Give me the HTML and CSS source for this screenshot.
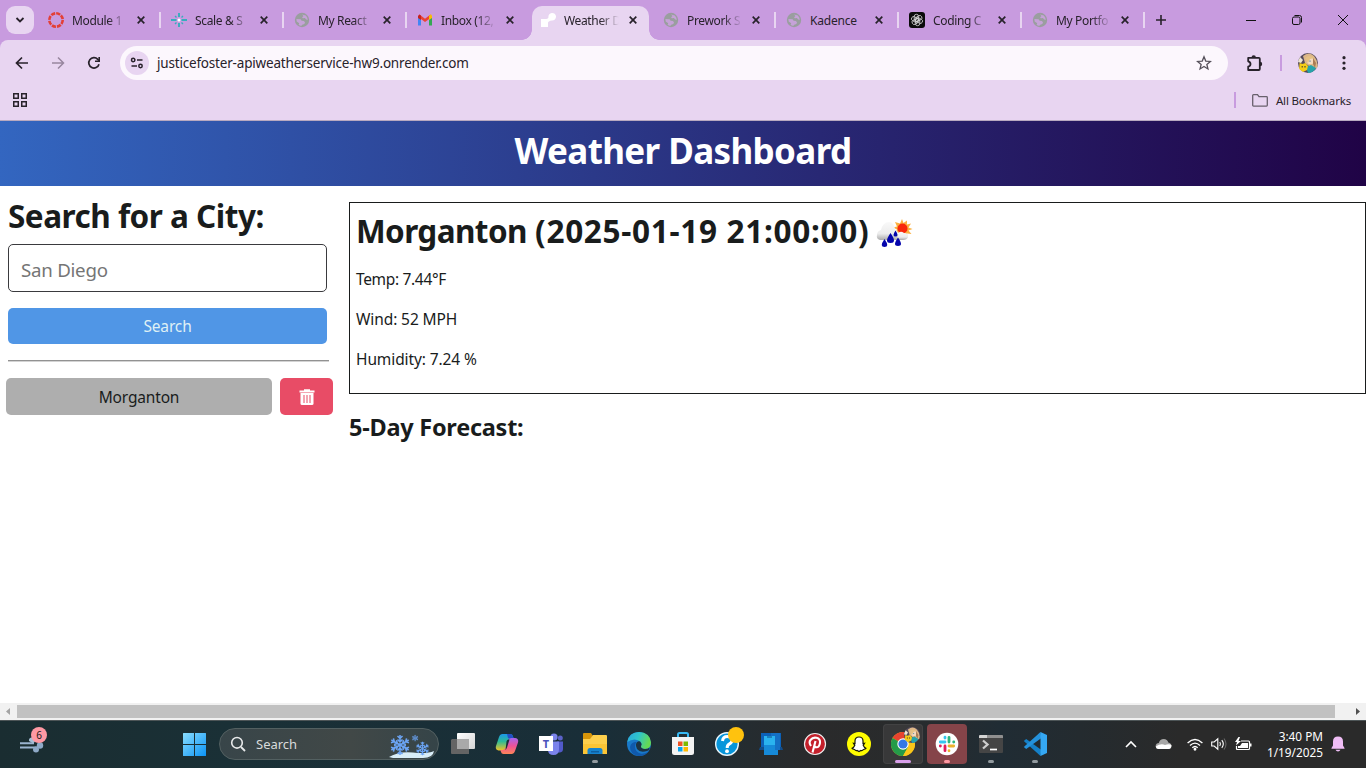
FILE: index.html
```
<!DOCTYPE html>
<html lang="en">
<head>
<meta charset="utf-8">
<title>Weather Dashboard</title>
<link rel="stylesheet" href="styles.css">
</head>
<body>
<svg class="defs" aria-hidden="true">
  <symbol id="close" viewBox="0 0 8 8"><path d="M.7.7l6.6 6.6M7.3.7L.7 7.3" fill="none" stroke="#28222b" stroke-width="1.7"/></symbol>
  <symbol id="globe" viewBox="0 0 16 16"><circle cx="8" cy="8" r="7.2" fill="#9a9e9f"/><path d="M2.4 7l4.2.3 1 1.500 2.200.2 1.200 1.300-.6 1.800-2.200.6-1 1.300-2.600-.9.6-1.900-2.500-1.600zM8 2.600l1.500 1.400-1.400 1.300.7 1 2.100-.2 1.400 1.500 1.400.3-.4-2.200L11.800 3.600z" fill="#c6a2d8"/></symbol>
  <symbol id="avatar" viewBox="0 0 20 20"><circle cx="10" cy="10" r="10" fill="#554b5c"/><path d="M5 3Q11-2 16 3q5 6 3 12l-4 1L7 10z" fill="#dcb788"/><path d="M2 4l3 3-2 3-3-1z" fill="#eee6d3"/><circle cx="12.500" cy="8" r="3.300" fill="#f5d9bd"/><path d="M7 5q5-4 9 0l-4 1-2 4z" fill="#e5c183"/><path d="M15 5l3 5-1 5-2-4z" fill="#a97c55"/><path d="M12 7.500v1.300" stroke="#3b7fa8"/><path d="M8 14l5-2 5 3q-3 5-8 5z" fill="#26a3aa"/><path d="M1.500 10l3 1 3-1 2.500 3-1 4-4 2-3.800-3z" fill="#f5ce16"/><path d="M4.200 13v1.500M7 13v1.500" stroke="#37302b"/></symbol>
</svg>

<div class="tabstrip">
  <button class="tab-search"><svg width="10" height="6" viewBox="0 0 10 6"><path d="M1.500 1l3.500 3.500L8.500 1" fill="none" stroke="#28222b" stroke-width="1.800"/></svg></button>
  <div class="tab"><svg class="fav" viewBox="0 0 16 16"><circle cx="8" cy="8" r="6.700" fill="none" stroke="#e33f36" stroke-width="2.600" stroke-dasharray="4.200 1.060"/></svg><span>Module 1</span><svg class="x"><use href="#close"/></svg></div>
  <div class="tab"><svg class="fav" viewBox="0 0 16 16"><path d="M0 8h5.500M10.500 8H16M8 1v4M8 11v4" stroke="#36aebd" stroke-width="1.900"/><path d="M4 4l1.500 1.500M12 4l-1.500 1.500M4 12l1.500-1.500M12 12l-1.500-1.500" stroke="#36aebd" stroke-width="1.400"/><circle cx="8" cy="8" r="1.500" fill="#fff"/></svg><span>Scale &amp; S</span><svg class="x"><use href="#close"/></svg></div>
  <div class="tab"><svg class="fav"><use href="#globe"/></svg><span>My React</span><svg class="x"><use href="#close"/></svg></div>
  <div class="tab last"><svg class="fav" viewBox="0 0 16 16"><path d="M1 4v9.500h3V6z" fill="#4285f4"/><path d="M12 6v7.500h3V4z" fill="#34a853"/><path d="M1 4.500L2.500 2.500 8 6.800l5.500-4.300v3.400L8 10 4 7z" fill="#ea4335"/><path d="M12 3.700L14 2.300 15 4v2l-3 2z" fill="#fbbc04"/><path d="M1 4l1.500-1.500L4 3.700V8L1 6z" fill="#c5221f"/></svg><span>Inbox (12,</span><svg class="x"><use href="#close"/></svg></div>
  <div class="tab active"><svg class="fav" viewBox="0 0 16 16"><path d="M1 7h5q1.500 0 2.500-1.500a3.800 3.800 0 1 1 3.500 3q-4 .5-4 2.500v4H1z" fill="#fff"/></svg><span>Weather D</span><svg class="x"><use href="#close"/></svg></div>
  <div class="tab"><svg class="fav"><use href="#globe"/></svg><span>Prework S</span><svg class="x"><use href="#close"/></svg></div>
  <div class="tab"><svg class="fav"><use href="#globe"/></svg><span class="full">Kadence</span><svg class="x"><use href="#close"/></svg></div>
  <div class="tab"><svg class="fav" viewBox="0 0 16 16"><rect width="16" height="16" rx="3" fill="#0b0b0b"/><g fill="none" stroke="#d8d8d8" stroke-width=".8"><rect id="petal" x="5.200" y="2.300" width="4.400" height="7.200" rx="2.200"/><use href="#petal" transform="rotate(60 8 8)"/><use href="#petal" transform="rotate(120 8 8)"/><use href="#petal" transform="rotate(180 8 8)"/><use href="#petal" transform="rotate(240 8 8)"/><use href="#petal" transform="rotate(300 8 8)"/></g></svg><span>Coding C</span><svg class="x"><use href="#close"/></svg></div>
  <div class="tab"><svg class="fav"><use href="#globe"/></svg><span>My Portfo</span><svg class="x"><use href="#close"/></svg></div>
  <svg class="newtab" width="12" height="12" viewBox="0 0 12 12"><path d="M6 1v10M1 6h10" stroke="#28222b" stroke-width="1.600"/></svg>
  <div class="window-controls">
    <svg width="12" height="12" viewBox="0 0 12 12"><path d="M1 6.500h10" stroke="#111"/></svg>
    <svg width="12" height="12" viewBox="0 0 12 12" fill="none" stroke="#111"><rect x="1.500" y="3" width="7.500" height="7.500" rx="1.500"/><path d="M3.500 1.500H8.500q2 0 2 2V8.500"/></svg>
    <svg width="12" height="12" viewBox="0 0 12 12"><path d="M1 1l10 10M11 1L1 11" stroke="#111"/></svg>
  </div>
</div>

<div class="chrome">
  <div class="toolbar">
    <svg class="nav" width="16" height="16" viewBox="0 0 16 16"><path d="M14 8H3M8 2.500L2.500 8 8 13.500" fill="none" stroke="#28222b" stroke-width="1.700"/></svg>
    <svg class="nav" width="16" height="16" viewBox="0 0 16 16"><path d="M2 8h11M8 2.500L13.500 8 8 13.500" fill="none" stroke="#98879f" stroke-width="1.500"/></svg>
    <svg class="nav" width="16" height="16" viewBox="0 0 16 16"><path d="M13 9.200A5.200 5.200 0 1 1 11.800 4.300L13 5.500" fill="none" stroke="#28222b" stroke-width="1.700"/><path d="M14 2v5H9V5.500h3.400V2z" fill="#28222b"/></svg>
    <div class="omnibox">
      <i class="site"><svg width="14" height="12" viewBox="0 0 14 12" fill="none" stroke="#28222b" stroke-width="1.500"><circle cx="3.200" cy="3" r="1.700"/><path d="M7 3h5.500M1.500 9H7"/><circle cx="10.500" cy="9" r="1.700"/></svg></i>
      <span class="url">justicefoster-apiweatherservice-hw9.onrender.com</span>
      <svg width="16" height="16" viewBox="0 0 16 16"><path d="M8 1.800l1.750 4.300 4.650.35-3.550 3 1.100 4.500L8 11.500l-3.950 2.450 1.100-4.500-3.550-3 4.650-.35z" fill="none" stroke="#55505a" stroke-width="1.300"/></svg>
    </div>
    <svg class="ext" width="18" height="18" viewBox="0 0 18 18"><path d="M2.200 3.800h10.600q1 0 1 1v10.200q0 1-1 1H2.200v-3.300q2.300-.7 2.300-2.700t-2.300-2.700z" fill="none" stroke="#28222b" stroke-width="1.800" stroke-linejoin="round"/><path d="M5.500 3.500a2.200 2.200 0 0 1 4.400 0zM14 7.800a2.200 2.200 0 0 1 0 4.400z" fill="#28222b"/></svg>
    <i class="bar"></i>
    <svg class="avatar" width="20" height="20"><use href="#avatar"/></svg>
    <svg class="kebab" width="4" height="14" viewBox="0 0 4 14" fill="#28222b"><circle cx="2" cy="1.700" r="1.600"/><circle cx="2" cy="7" r="1.600"/><circle cx="2" cy="12.300" r="1.600"/></svg>
  </div>
  <div class="bookmarks">
    <svg width="14" height="14" viewBox="0 0 14 14" fill="none" stroke="#28222b" stroke-width="1.500"><path d="M.75.750h4.500v4.500h-4.500zM8.750.750h4.500v4.500h-4.500zM.75 8.750h4.500v4.500h-4.500zM8.750 8.750h4.500v4.500h-4.500z"/></svg>
    <i class="bar"></i>
    <svg class="folder" width="16" height="13" viewBox="0 0 16 13"><path d="M.7 1.500Q.7.700 1.500.7h4L7 2.700h7.500q.8 0 .8.800v7.800q0 .8-.8.800h-13q-.8 0-.8-.8z" fill="none" stroke="#68606c" stroke-width="1.300"/></svg>
    <span>All Bookmarks</span>
  </div>
</div>

<main class="page">
  <header class="hero"><h1>Weather Dashboard</h1></header>
  <div class="content">
    <aside class="sidebar">
      <h2 class="label">Search for a City:</h2>
      <div class="field"><span>San Diego</span></div>
      <button class="search-btn">Search</button>
      <hr>
      <div class="history">
        <button class="city">Morganton</button>
        <button class="trash"><svg width="16" height="16" viewBox="0 0 16 16"><path d="M.5 1.500H5V.2h6v1.300h4.500V3.500H.5z" fill="#fff"/><path d="M1.500 4h13v10.500q0 1.500-1.500 1.500H3q-1.500 0-1.500-1.500z" fill="#fff"/><path d="M5 6v8M8 6v8M11 6v8" stroke="#e84c66"/></svg></button>
      </div>
    </aside>
    <section class="results">
      <article class="today">
        <h2><span><span class="place">Morganton</span> <span class="date">(2025-01-19 21:00:00)</span></span>
          <svg width="40" height="32" viewBox="0 0 40 32"><defs><linearGradient id="cl" x2="0" y2="1"><stop offset="0" stop-color="#f9f9f9"/><stop offset=".65" stop-color="#ececec"/><stop offset="1" stop-color="#aaa"/></linearGradient></defs><path d="M28 1l1.500 4 3.500-2.500v4l4-1-2.500 4 4 1.500-4 1.500 3 3.500-4.500-.5.500 4-4-3-3.500 2.500-.5-4.500-4.500 1 2-4-4-2 4-1-2-4.500 5 1.500z" fill="#fbb040"/><circle cx="28.500" cy="10.500" r="5" fill="#f8270b"/><path d="M20 21q-1-5 4-5 2-4 6-1 5 0 4 4-1 3-5 3h-8z" fill="url(#cl)"/><path d="M6 22q-4-1-3-5 0-4 4-5 2-8 8-8 5 0 6 8 4 1 3 6-1 4-5 4z" fill="url(#cl)"/><path d="M10.500 21q5.500 8 0 8t0-8M16.500 15q7 10 0 10t0-10M21.500 12.500q4 6 0 6t0-6M24 19.500q6 8.500 0 8.500t0-8.500" fill="#0505ac"/></svg></h2>
        <p class="temp">Temp: 7.44°F</p>
        <p>Wind: 52 MPH</p>
        <p>Humidity: 7.24 %</p>
      </article>
      <h3>5-Day Forecast:</h3>
    </section>
  </div>
</main>

<div class="hscroll">
  <svg width="17" height="17" viewBox="0 0 17 17"><path d="M10 5v7L6 8.500z" fill="#a3a3a3"/></svg>
  <i></i>
  <svg width="17" height="17" viewBox="0 0 17 17"><path d="M7 5v7l4-3.500z" fill="#505050"/></svg>
</div>

<footer class="taskbar">
  <div class="widgets"><svg width="24" height="18" viewBox="0 0 24 18"><path d="M0 8.200h14M0 12.600h17" stroke="#9ab4cf" stroke-width="2"/><path d="M9 6a3 3 0 1 1 4 2.300" fill="#a7bdd5"/><circle cx="16" cy="14.500" r="3" fill="#8ea9c7"/><circle cx="20" cy="10.500" r="3.200" fill="#8ea9c7"/></svg><b>6</b></div>
  <svg class="start" width="24" height="24" viewBox="0 0 24 24"><defs><linearGradient id="w" gradientUnits="userSpaceOnUse" x1="0" y1="0" x2="24" y2="24"><stop offset="0" stop-color="#8fe1ff"/><stop offset="1" stop-color="#0b93f5"/></linearGradient></defs><path d="M1 1.500q0-.5.500-.5H12v11H1zM13 1h10.500q.5 0 .5.500V12H13zM1 13h11v11H1.500q-.5 0-.5-.5zM13 13h11v10.500q0 .5-.5.500H13z" fill="url(#w)"/></svg>
  <div class="tsearch">
    <svg width="16" height="16" viewBox="0 0 16 16"><circle cx="7" cy="6.800" r="5.300" fill="none" stroke="#e8eaeb" stroke-width="1.600"/><path d="M11 11l4 4" stroke="#e8eaeb" stroke-width="1.800"/></svg>
    <span>Search</span>
    <svg class="snow" width="46" height="24" viewBox="0 0 46 24"><path d="M0 23Q10 17 24 18.500T45 17Q44 24 34 24H4z" fill="#d8edf7"/><g stroke="#6ba4f4" stroke-width="1.500" fill="none"><g id="fl"><path id="arm" d="M11 11V1M8.500 2L11 4.500 13.500 2M8.500 5.500L11 8l2.500-2.500"/><use href="#arm" transform="rotate(60 11 11)"/><use href="#arm" transform="rotate(120 11 11)"/><use href="#arm" transform="rotate(180 11 11)"/><use href="#arm" transform="rotate(240 11 11)"/><use href="#arm" transform="rotate(300 11 11)"/></g><use href="#fl" transform="translate(26 7) scale(.68)"/><use href="#fl" transform="translate(22.500 .5) scale(.33)"/></g></svg>
  </div>
  <div class="apps">
    <i><svg viewBox="0 0 24 24"><defs><linearGradient id="tv" y2="1"><stop offset="0" stop-color="#fff"/><stop offset="1" stop-color="#d5d5d5"/></linearGradient></defs><rect x="6" y="1" width="18" height="16" rx="1" fill="url(#tv)"/><path d="M1 7h17v15H1q-1 0-1-1V8z" fill="#646464"/><path d="M6 7h12v10H6z" fill="#a9a9a9"/></svg></i>
    <i><svg viewBox="0 0 24 24"><defs><linearGradient id="c1" x2="0" y2="1"><stop offset="0" stop-color="#1c98e8"/><stop offset=".45" stop-color="#2dbb97"/><stop offset="1" stop-color="#f5c324"/></linearGradient><linearGradient id="c2" x2="0" y2="1"><stop offset="0" stop-color="#a565ee"/><stop offset=".5" stop-color="#ee5297"/><stop offset="1" stop-color="#ff8557"/></linearGradient></defs><path d="M7.500 2h8q2 0 2.700 3l.6 2H15q-1.500 0-2 2l-2 6.500Q10 19 7 18.500H3.500Q0 18 1 14L4 5q1-3 3.500-3z" fill="url(#c1)"/><path d="M12 2h3.500q2 0 2.700 3l.6 2H15l-2-1z" fill="#244fc6"/><path d="M16.500 22h-8q-2 0-2.700-2.500L5.500 18H8q2 0 3-3l2-6q.8-3 3.500-3H20q4 .5 3 4.500l-3 8.500q-1 3-3.500 3z" fill="url(#c2)"/><path d="M11.500 9.500q.5-2 2-2h1l-2.500 8q-.7 2-2 2.500 1-1 .8-2.500z" fill="#1c2f38"/></svg></i>
    <i><svg viewBox="0 0 24 24"><circle cx="15" cy="5" r="3.600" fill="#7b83eb"/><circle cx="21.300" cy="6" r="2.500" fill="#5b62c8"/><path d="M18 9.500h6V17q0 3-3 3.500h-4z" fill="#5059c9"/><path d="M9 9.500h11V17q0 6-5.500 6T9 18z" fill="#7b83eb"/><path d="M0 4h14v15H0z" fill="#fff"/><text x="7" y="16" text-anchor="middle" class="teams-t">T</text></svg></i>
    <i class="open"><svg viewBox="0 0 24 24"><path d="M0 2q0-1 1-1h7l2 3-3 4H0z" fill="#d79509"/><path d="M0 7h7l3-4h13q1 0 1 1v18H0z" fill="#fdcf4c"/><path d="M0 12h24v10H0z" fill="#fbc535"/><path d="M4.500 22v-3.500q0-2.500 2.500-2.500h10q2.500 0 2.500 2.500V22z" fill="#1684cf"/><path d="M8 19h8v1.500H8z" fill="#0e5fa0"/></svg></i>
    <i><svg viewBox="0 0 24 24"><defs><linearGradient id="e1" x2="1" y2=".3"><stop offset="0" stop-color="#2aa5dd"/><stop offset=".5" stop-color="#2fc4ca"/><stop offset="1" stop-color="#65da52"/></linearGradient></defs><circle cx="12" cy="12" r="12" fill="#1979c9"/><path d="M.3 10Q2 0 12 0q11 .5 12 10.500 0 6-6 6.500-5 0-4-3 1.500-3-1.500-5Q7 5.500.3 10z" fill="url(#e1)"/><path d="M8.500 12q-2 7 5 9.500 5 1 9-3Q18 24.500 11 24 3 22 3 15q1-5 6.500-5z" fill="#1059ac"/><path d="M9 12q1-3.500 4-2.500 2.500 2.500 1 4.500-.5 2.500 4 3 3 0 4.500-1.500.5 2.500-2.500 3.500-7 2-10-2Q8.500 14 9 12z" fill="#1c3445"/></svg></i>
    <i><svg viewBox="0 0 24 24"><path d="M7 6V2.500Q7 1 8.500 1h7Q17 1 17 2.500V6" fill="none" stroke="#37b9f4" stroke-width="2"/><path d="M1 5h22v15.500q0 2.500-2.500 2.500h-17Q1 23 1 20.500z" fill="#f3f3f3"/><path d="M7 9.500h4.500V14H7z" fill="#f15325"/><path d="M12.500 9.500H17V14h-4.500z" fill="#7eba00"/><path d="M7 15h4.500v4.500H7z" fill="#07a4ef"/><path d="M12.500 15H17v4.500h-4.500z" fill="#ffb900"/></svg></i>
    <i class="help"><svg viewBox="0 0 24 24"><circle cx="12" cy="12" r="11.300" fill="#0795da" stroke="#e9f5fb" stroke-width="1.400"/><path d="M7.500 9q.5-4.500 4.700-4.500T17 8.200q0 2.300-2.500 3.600T12.200 16" fill="none" stroke="#fff" stroke-width="3"/><circle cx="12" cy="19.200" r="1.900" fill="#fff"/></svg><b></b></i>
    <i><svg viewBox="0 0 24 24"><path d="M2 1h20v17H2z" fill="#0c61b8"/><path d="M1 15h22l1 3H0z" fill="#124d8a"/><path d="M5 4h14v19H5z" fill="#168ad8"/><path d="M12 1h9v17h-9z" fill="#1470c5"/><path d="M5 4h11v9H5z" fill="#2ab3ef"/><path d="M5 13h11v9H5z" fill="#168ad8"/><path d="M8 5h5" stroke="#0c4f89"/></svg></i>
    <i><svg viewBox="0 0 24 24"><circle cx="12" cy="12" r="10.500" fill="#c4202b" stroke="#eee" stroke-width="1.200"/><path d="M8 14Q5.500 10.500 7.500 8q2.300-3 6-2.200 4 1 3.500 5-.7 4.500-3.500 4.500-1.500 0-2-1.300M12.500 9L9.500 20.500" fill="none" stroke="#fff" stroke-width="2.100"/></svg></i>
    <i><svg viewBox="0 0 24 24"><circle cx="12" cy="12" r="12" fill="#fffc00"/><path d="M12 5q4 0 4 4v2.500l1.500-.2-1.300 2q1 2.500 2.800 3-.5 1-2.500 1.200-1 1.300-2.500 1L12 19.500 10 18.500q-1.500.3-2.500-1-2-.2-2.500-1.200 1.800-.5 2.800-3l-1.300-2 1.500.2V9q0-4 4-4z" fill="#fff" stroke="#171707" stroke-width="1.200"/></svg></i>
    <i class="open focus"><svg viewBox="0 0 24 24"><circle cx="12" cy="12" r="12" fill="#f6c51d"/><path d="M12 12L1.600 6A12 12 0 0 1 22.400 6z" fill="#e8432f"/><path d="M12 12l5.200 3-5.200 9A12 12 0 0 1 1.600 6z" fill="#249b49"/><path d="M12 12V6.500h10.700A12 12 0 0 1 12 24l5-9z" fill="#fbc719"/><circle cx="12" cy="12" r="5.700" fill="#fff"/><circle cx="12" cy="12" r="4.600" fill="#3478e5"/></svg><svg class="badge-avatar" viewBox="0 0 20 20"><use href="#avatar"/></svg></i>
    <i class="open alert"><svg viewBox="0 0 24 24"><circle cx="12" cy="12" r="11.300" fill="#fff"/><g stroke-width="2.800" stroke-linecap="round"><path d="M10 5.200V6M5.300 10H10" stroke="#36c5f0"/><path d="M14 5.300V10M18.700 10h.1" stroke="#2eb67d"/><path d="M14 14h4.700M14 18.700v.1" stroke="#ecb22e"/><path d="M10 14v4.700M5.300 14h.1" stroke="#e01e5a"/></g></svg></i>
    <i class="open"><svg viewBox="0 0 24 24"><rect y="3" width="24" height="18" rx="1" fill="#454545"/><path d="M0 6V4q0-1 1-1h22q1 0 1 1v2z" fill="#8f8f8f"/><path d="M1 3h7v3H0V4z" fill="#d4d4d4"/><path d="M4 8.500l4.500 4L4 16.500" fill="none" stroke="#ccc" stroke-width="2.300"/><path d="M11 17.500h7" stroke="#fff" stroke-width="1.700"/></svg></i>
    <i class="open"><svg viewBox="0 0 24 24"><path d="M17.500 24L.8 9 3.200 7l15.300 11z" fill="#1580c8"/><path d="M17.500 0L.8 15l2.400 2L18.500 6z" fill="#2492dc"/><path d="M17.500 0L24 3v18l-6.500 3z" fill="#35a8f3"/></svg></i>
  </div>
  <div class="tray">
    <svg width="12" height="8" viewBox="0 0 12 8"><path d="M1 7l5-5 5 5" fill="none" stroke="#fff" stroke-width="1.600"/></svg>
    <svg class="cloud" width="17" height="12" viewBox="0 0 17 12"><path d="M3.500 11Q0 10 .8 7q.7-2 3-2 1-4 5-4 3.500 0 4.500 3.500 3 .5 3.200 3.500 0 3-3 3z" fill="#a7a7a7"/><path d="M3.500 11Q1 11 .8 8.500 6 4.800 10 7q4-1.500 6.400 0 0 4-3 4z" fill="#fff"/></svg>
    <svg class="wifi" width="16" height="13" viewBox="0 0 16 13" fill="none" stroke="#fff" stroke-width="1.300"><path d="M.6 5q7.400-7 14.800 0M3 7.500q5-4.800 10 0M5.300 9.800q2.700-2.600 5.400 0"/><circle cx="8" cy="11.300" r=".8" fill="#fff"/></svg>
    <svg class="vol" width="16" height="14" viewBox="0 0 16 14" fill="none" stroke="#fff" stroke-width="1.100"><path d="M.7 5h2.500L6.800 1.800v10.400L3.200 9H.7z"/><path d="M8.800 5q1.300 2 0 4M10.800 3.200q3 3.800 0 7.600"/><path d="M13 1.500q4 5.500 0 11" stroke="#666"/></svg>
    <svg class="bat" width="17" height="14" viewBox="0 0 17 14"><path d="M6 4h7.500q1 0 1 1v6.500q0 1-1 1h-11q-1 0-1-1V9" fill="none" stroke="#fff" stroke-width="1.200"/><path d="M7 6h6v5H3V9h2zM15 6.500h1.500v3H15zM3.500 0L0 5h2L1 8.500 6 4H3.500L5 0z" fill="#fff"/></svg>
    <div class="clock"><span>3:40 PM</span><span>1/19/2025</span></div>
    <svg class="bell" width="14" height="16" viewBox="0 0 14 16"><path d="M7 .5q5 0 5 5v4l1.500 2.500v.8H.5V12L2 9.500v-4q0-5 5-5zM4.500 13.800h5q-.8 1.800-2.500 1.800t-2.500-1.800z" fill="#efbdf5"/></svg>
  </div>
</footer>
</body>
</html>
```
FILE: styles.css
```
* { box-sizing: border-box; }
body { margin: 0; width: 1366px; height: 768px; overflow: hidden; display: flex; flex-direction: column; background: #c89bdf; color: #191c1c; font-family: "Noto Sans", "Open Sans", sans-serif; }
button { border: 0; padding: 0; font: inherit; }
svg { flex: none; display: block; }
.defs { position: absolute; width: 0; height: 0; }

.tabstrip { height: 40px; flex: none; display: flex; align-items: center; padding-left: 6px; }
.tab-search { width: 28px; height: 28px; border-radius: 9px; background: #e8d5f1; display: grid; place-items: center; margin-right: 3px; }
.tab { width: 123px; height: 34px; flex: none; display: flex; align-items: center; padding-left: 11px; position: relative; font-size: 12px; color: #28222b; }
.tab::after { content: ""; position: absolute; right: -1px; top: 9px; width: 2px; height: 16px; background: #e8d5f1; }
.tab.last::after { display: none; }
.tab span { width: 56px; margin-left: 8px; white-space: nowrap; letter-spacing: -.35px; -webkit-mask-image: linear-gradient(90deg, #000 64%, transparent 98%); mask-image: linear-gradient(90deg, #000 64%, transparent 98%); }
.tab span.full { -webkit-mask-image: none; mask-image: none; letter-spacing: -.2px; }
.fav { width: 16px; height: 16px; }
.x { width: 8px; height: 8px; margin-left: 9px; }
.tab.active { width: 117px; height: 34px; margin: 6px 3px 0; padding: 0 0 6px 8px; background: #e8d5f1; border-radius: 10px 10px 0 0; }
.tab.active::before, .tab.active::after { content: ""; position: absolute; top: auto; bottom: 0; width: 10px; height: 10px; }
.tab.active::before { left: -10px; background: radial-gradient(circle at 0 0, transparent 9.500px, #e8d5f1 10px); }
.tab.active::after { right: -10px; background: radial-gradient(circle at 100% 0, transparent 9.500px, #e8d5f1 10px); }
.newtab { margin-left: 11px; }
.window-controls { margin-left: auto; display: flex; gap: 34px; padding-right: 17px; }

.chrome { height: 81px; flex: none; background: #e8d5f1; border-radius: 8px 8px 0 0; border-bottom: 1px solid #b8a9c0; }
.toolbar { height: 46px; display: flex; align-items: center; padding: 0 20px 0 14px; }
.nav { margin-right: 20px; }
.omnibox { width: 1108px; height: 34px; margin-left: -2px; border-radius: 17px; background: #fcf7fd; display: flex; align-items: center; padding: 0 16px 0 5px; }
.site { width: 24px; height: 24px; border-radius: 50%; background: #e8d5f1; display: grid; place-items: center; }
.url { flex: 1; margin-left: 8px; font-size: 13.5px; letter-spacing: -.19px; color: #28222b; }
.ext { margin-left: 18px; }
.bar { width: 2px; height: 16px; background: #c89bdf; }
.toolbar .bar { margin-left: 16px; }
.avatar { margin-left: 16px; }
.kebab { margin-left: auto; }
.bookmarks { height: 28px; display: flex; align-items: center; padding: 0 15px 0 13px; font-size: 11.5px; letter-spacing: -.18px; color: #28222b; }
.bookmarks .bar { margin-left: auto; }
.folder { margin: 0 8px 0 16px; }

.page { height: 582px; flex: none; background: #fff; }
.hero { height: 65px; background: linear-gradient(91deg, #3366c0, #282874 60%, #200346); color: #fff; text-align: center; }
.hero h1 { margin: 0; font-size: 35px; line-height: 60px; letter-spacing: -.62px; }
.content { display: flex; }
.sidebar { width: 349px; padding: 10px 16px 0 8px; }
.label { margin: 0; font-size: 31.5px; line-height: 40px; white-space: nowrap; letter-spacing: -.5px; }
.field { width: 319px; height: 48px; margin-top: 8px; border: 1px solid #3a3a3e; border-radius: 5px; padding: 2px 0 0 12px; display: flex; align-items: center; font-size: 18.7px; letter-spacing: -.25px; color: #757575; }
.search-btn { display: block; width: 319px; height: 36px; margin-top: 16px; border-radius: 5px; background: #5096e6; color: #dff0f5; font-size: 15.5px; letter-spacing: -.15px; }
hr { width: 321px; margin: 16px 0; border: 0; height: 2px; background: linear-gradient(#929292 50%, #d3d3d3 50%); }
.history { display: flex; gap: 8px; margin-left: -2px; width: 327px; }
.city { width: 266px; height: 37px; border-radius: 5px; background: #aeaeae; color: #191c1c; font-size: 15.5px; letter-spacing: -.17px; }
.trash { width: 53px; height: 37px; border-radius: 5px; background: #e84c66; display: grid; place-items: center; }
.results { flex: 1; padding-top: 16px; }
.today { height: 192px; border: 1px solid #191c1c; padding: 8px 6px; }
.today h2 { margin: 0; height: 40px; font-size: 31.5px; line-height: 40px; display: flex; align-items: center; gap: 5px; white-space: nowrap; }
.place { letter-spacing: -.6px; }
.date { letter-spacing: .7px; }
.today h2 svg { margin-top: 6px; }
.today p { margin: 16px 0 0; font-size: 15.5px; letter-spacing: -.1px; line-height: 24px; }
.today .temp { letter-spacing: -.33px; }
.results h3 { margin: 17px 0 0; font-size: 23.5px; line-height: 32px; letter-spacing: -.25px; }

.hscroll { height: 17px; flex: none; display: flex; align-items: center; background: #f1f1f1; }
.hscroll i { flex: 1; height: 13px; background: #c1c1c1; margin-right: 14px; }

.taskbar { height: 48px; flex: none; display: flex; align-items: center; background: linear-gradient(90deg, #1a2d31 0, #1a3036 230px, #192e38 600px, #232d32 720px, #2a2a2b 820px, #292b2c 900px, #202c34 1000px, #242b2f 1080px, #2a2a2a 1180px); box-shadow: inset 0 1px #4d5557; color: #fff; }
.widgets { position: relative; width: 182px; padding-left: 20px; }
.widgets b { position: absolute; left: 31px; top: -8px; width: 16px; height: 16px; border-radius: 50%; background: #ff99a4; color: #1b1b1b; font: 10px/16px "Noto Sans", sans-serif; text-align: center; }
.tsearch { width: 220px; height: 32px; margin-left: 13px; border: 1px solid #536061; border-radius: 16px; background: linear-gradient(90deg, #384549, #414847 60%, #354448); display: flex; align-items: center; padding: 0 3px 0 10px; font-size: 13px; color: #d9dbdb; }
.tsearch span { margin-left: 10px; }
.snow { margin: 3px 0 0 auto; }
.apps { display: flex; gap: 4px; margin-left: 4px; }
.apps i { position: relative; width: 40px; height: 40px; border-radius: 4px; display: grid; place-items: center; font-style: normal; }
.apps svg { width: 24px; height: 24px; }
.open::after { content: ""; position: absolute; bottom: 1px; left: 17px; width: 6px; height: 3px; border-radius: 2px; background: #929a9f; }
.focus { background: #383839; box-shadow: inset 0 0 0 1px #424243; }
.focus::after { left: 12px; width: 16px; background: #d9a0eb; }
.alert { background: #854449; }
.alert::after { background: #ff99a4; }
.help b { position: absolute; left: 21px; top: 3px; width: 16px; height: 16px; border-radius: 50%; background: #ffc20e; }
.apps .badge-avatar { position: absolute; left: 21px; top: 3px; width: 16px; height: 16px; }
.teams-t { font: bold 11px "Noto Sans", sans-serif; fill: #4b53bc; }
.tray { margin-left: auto; display: flex; align-items: center; padding-right: 21px; }
.cloud { margin-left: 18px; }
.wifi { margin-left: 15px; }
.vol { margin-left: 8px; }
.bat { margin-left: 8px; }
.clock { width: 71px; display: flex; flex-direction: column; text-align: right; font-size: 11.800px; line-height: 16px; }
.bell { margin-left: 8px; }
```
